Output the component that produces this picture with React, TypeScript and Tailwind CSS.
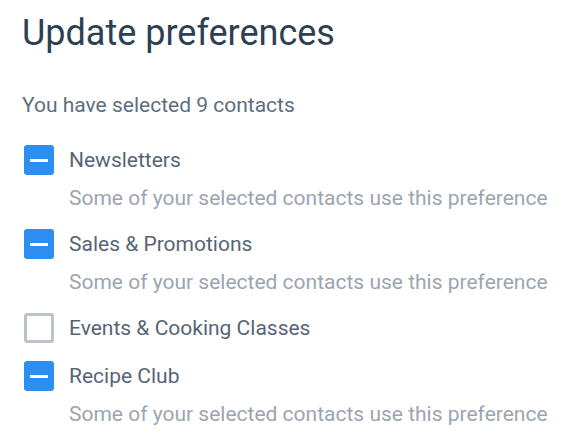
import React from "react";

const items = [
  { label: "Newsletters", checked: true },
  { label: "Sales & Promotions", checked: true },
  { label: "Events & Cooking Classes", checked: false },
  { label: "Recipe Club", checked: true },
];

function Box({ checked }: { checked: boolean }) {
  if (checked)
    return (
      <div className="w-[30px] h-[30px] rounded-[3px] bg-[#2b8ef0] flex items-center justify-center shrink-0">
        <div className="w-[18px] h-[3px] bg-white" />
      </div>
    );
  return <div className="w-[30px] h-[30px] rounded-[3px] border-[3px] border-[#bcc3ca] bg-white shrink-0" />;
}

export default function App() {
  return (
    <div className="w-[571px] h-[442px] bg-white pl-[22px] pt-[10px]" style={{ fontFamily: "Roboto, sans-serif" }}>
      <h1 className="text-[36px] leading-[46px] text-[#2d3f52]">Update preferences</h1>
      <p className="mt-[35px] text-[21px] leading-[28px] text-[#5e6e7f]">You have selected 9 contacts</p>
      <div className="mt-[26px] flex flex-col gap-[18px] pl-[2px]">
        {items.map((it) => (
          <div key={it.label}>
            <div className="flex items-center gap-[15px]">
              <Box checked={it.checked} />
              <span className="text-[21px] leading-[28px] text-[#566576]">{it.label}</span>
            </div>
            {it.checked && (
              <div className="pl-[45px] mt-[10px] text-[21px] leading-[26px] text-[#9ba5b1]">
                Some of your selected contacts use this preference
              </div>
            )}
          </div>
        ))}
      </div>
    </div>
  );
}
